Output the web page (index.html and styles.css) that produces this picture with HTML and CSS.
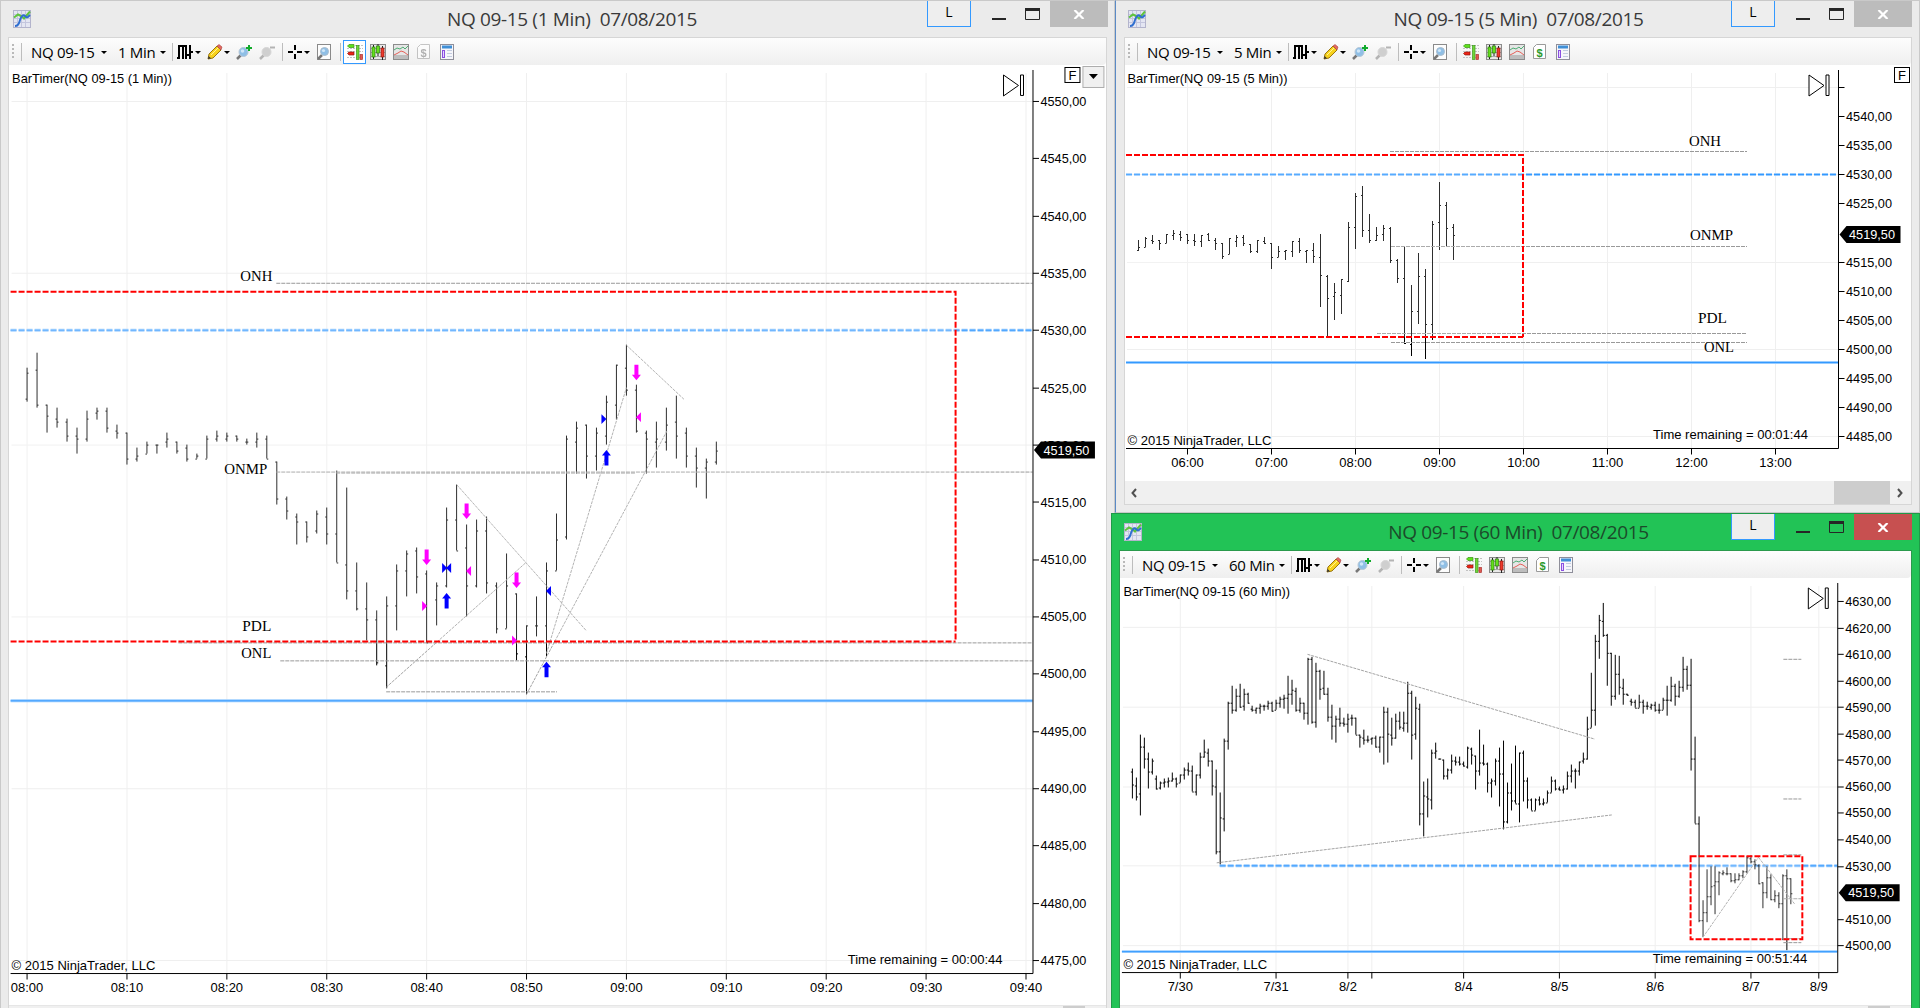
FILE: index.html
```html
<!DOCTYPE html>
<html lang="en">
<head>
    <meta charset="UTF-8">
    <title>NQ 09-15</title>
    <link rel="stylesheet" href="styles.css">
</head>
<body>
<svg class="defs" width="0" height="0">
    <symbol id="i-app" viewBox="0 0 18 18"><rect x=".5" y=".5" width="17" height="17" fill="#e4e6f2" stroke="#b3b4cc"/><path d="M4.500 1v16M8.500 1v16M12.500 1v16M1 4.500h16M1 8.500h16M1 12.500h16" stroke="#c4c6de" fill="none"/><path d="M1 7.500l4-3 4 2 2 2 6-7" stroke="#5fc43c" stroke-width="2" fill="none"/><path d="M2 16c4 0 4-3 5-6s3-6 5-4 2 2 5-1" stroke="#2f6fd0" stroke-width="2" fill="none"/></symbol>
    <symbol id="i-bars" viewBox="0 0 16 16"><path d="M2 1v14M0 14h2M2 2h3M6 1v14M9 1v14M6 14h1M7 2h2M9 11h2M13 1v14M11 11h2M13 8h3" stroke="#000" stroke-width="2" fill="none"/></symbol>
    <symbol id="i-pencil" viewBox="0 0 16 16"><path d="M1 15l1-5 8-8 4 4-8 8z" fill="#f7d21c" stroke="#9a7510"/><path d="M4 11l7-7" stroke="#fff39a"/><path d="M10 2l2-1.500 3 2.500-1 3z" fill="#e46a62" stroke="#a8453f" stroke-width=".6"/><path d="M1 15l.6-3L4 14.300z" fill="#333"/></symbol>
    <symbol id="i-zin" viewBox="0 0 17 16"><path d="M1 15l4-4" stroke="#777" stroke-width="2.500"/><circle cx="7.500" cy="8" r="4.500" fill="#8fbfe6" stroke="#b5c6d6"/><circle cx="6.500" cy="7" r="1.800" fill="#cfe6f8"/><path d="M13 1v6M10 4h6" stroke="#12ab2c" stroke-width="2"/></symbol>
    <symbol id="i-zout" viewBox="0 0 17 16"><path d="M1 15l4-4" stroke="#b4b4b4" stroke-width="2.500"/><circle cx="7.500" cy="8" r="4.500" fill="#cfcfcf" stroke="#d6d6d6"/><path d="M11 3.500h5" stroke="#b4b4b4" stroke-width="2"/></symbol>
    <symbol id="i-cross" viewBox="0 0 14 14"><path d="M7 0v5M7 9v5M0 7h5M9 7h5" stroke="#000" stroke-width="2"/></symbol>
    <symbol id="i-page" viewBox="0 0 15 16"><rect x=".5" y=".5" width="13" height="15" fill="#fdfdfd" stroke="#8a8a8a"/><path d="M1 15l4-4" stroke="#777" stroke-width="2.500"/><circle cx="7.500" cy="7.500" r="4" fill="#8fbfe6" stroke="#a9bccd"/><circle cx="6.500" cy="6.500" r="1.600" fill="#cfe6f8"/></symbol>
    <symbol id="i-depth" viewBox="0 0 16 16"><path d="M0 4.500h16M0 7.500h16M0 13.500h16M8 1.500h8" stroke="#c2c2c2" stroke-dasharray="2 1"/><path d="M.5 2L2 .5h5v3H2z" fill="#5fe01c" stroke="#3a9414" stroke-width=".7"/><path d="M.5 9.500L2 8h5v3H2z" fill="#ee2416" stroke="#8d1a12" stroke-width=".7"/><rect x="9.500" y="1.500" width="2.500" height="14" fill="#6fd638" stroke="#3f9a20" stroke-width=".7"/><rect x="13" y="10.500" width="2.500" height="5" fill="#e25a50" stroke="#a33" stroke-width=".7"/></symbol>
    <symbol id="i-candles" viewBox="0 0 16 16"><rect x=".5" y=".5" width="15" height="15" fill="#e9e9e9" stroke="#8c8c8c"/><path d="M1 4.500h14M1 8.500h14M1 12.500h14" stroke="#a8a8a8"/><path d="M3.500 1v14M8 0v12M12.500 2v14" stroke="#222"/><rect x="2" y="3" width="3" height="10" fill="#64e01c" stroke="#2f7d10" stroke-width=".7"/><rect x="6.500" y="2" width="3" height="7" fill="#64e01c" stroke="#2f7d10" stroke-width=".7"/><rect x="11" y="4" width="3" height="9" fill="#ee3a2c" stroke="#8d1a12" stroke-width=".7"/></symbol>
    <symbol id="i-lines" viewBox="0 0 16 16"><rect x=".5" y=".5" width="15" height="15" fill="#e6e6e6" stroke="#8c8c8c"/><path d="M1 11h14v4H1z" fill="#bdbdbd"/><path d="M1 6l3-2 3 1 3-2 2 2 3-3" stroke="#4fae74" fill="none"/><path d="M1 11l4-2 3-2 3 1 4 3" stroke="#e46058" fill="none"/></symbol>
    <symbol id="i-dollar" viewBox="0 0 13 16"><path d="M3.500.5h9v14h-12v-11z" fill="#fff" stroke="#9a9a9a"/><text x="6.500" y="12.500" text-anchor="middle" class="dollar">$</text></symbol>
    <symbol id="i-panel" viewBox="0 0 14 16"><rect x=".5" y=".5" width="13" height="15" fill="#f6f6fa" stroke="#8f8f9a"/><path d="M2 3h10" stroke="#3f8fd6" stroke-width="3"/><rect x="2.500" y="6.500" width="2" height="7" fill="#e6d6ff" stroke="#8a4fe0"/><path d="M7 6.500h5M7 9.500h5M7 12.500h5" stroke="#c2cbe0"/></symbol>
    <symbol id="i-min" viewBox="0 0 14 3"><path d="M0 1h14" stroke="#262626" stroke-width="2"/></symbol>
    <symbol id="i-max" viewBox="0 0 15 12"><path d="M.5 1v10.500h14V1" fill="none" stroke="#262626"/><path d="M0 1.500h15" stroke="#262626" stroke-width="3"/></symbol>
    <symbol id="i-close" viewBox="0 0 12 9"><path d="M1.500 0l9 9M10.500 0l-9 9" stroke="#fff" stroke-width="2.200"/></symbol>
</svg>

<div class="window win-1">
    <div class="titlebar">
        <svg class="app-icon"><use href="#i-app"/></svg>
        <h1>NQ 09-15 (1 Min)&nbsp; 07/08/2015</h1>
        <div class="controls"></div>
    </div>
    <div class="client">
        <div class="toolbar" data-period="1 Min"></div>
        <svg class="chart" id="chart-1" viewBox="9 65 1097 941"></svg>
        <div class="scrollbar"><span class="thumb"></span></div>
    </div>
</div>

<div class="window win-5">
    <div class="titlebar">
        <svg class="app-icon"><use href="#i-app"/></svg>
        <h1>NQ 09-15 (5 Min)&nbsp; 07/08/2015</h1>
        <div class="controls"></div>
    </div>
    <div class="client">
        <div class="toolbar" data-period="5 Min"></div>
        <svg class="chart" id="chart-5" viewBox="1125 65 786 416"></svg>
        <div class="scrollbar">
            <svg class="arrow" viewBox="0 0 6 10"><path d="M5 1L1.500 5 5 9"/></svg>
            <span class="thumb"></span>
            <svg class="arrow" viewBox="0 0 6 10"><path d="M1 1l3.500 4L1 9"/></svg>
        </div>
    </div>
</div>

<div class="window win-60 active">
    <div class="titlebar">
        <svg class="app-icon"><use href="#i-app"/></svg>
        <h1>NQ 09-15 (60 Min)&nbsp; 07/08/2015</h1>
        <div class="controls"></div>
    </div>
    <div class="client">
        <div class="toolbar" data-period="60 Min"></div>
        <svg class="chart" id="chart-60" viewBox="1120 578 791 428"></svg>
        <div class="scrollbar"><span class="thumb"></span></div>
    </div>
</div>

<script src="script.js"></script>
</body>
</html>
```
FILE: styles.css
```css
* { box-sizing: border-box; }
body { margin: 0; width: 1920px; height: 1008px; overflow: hidden; position: relative; background: #ebebeb; font-family: "Open Sans", sans-serif; color: #000; }
.defs { position: absolute; }

/* windows */
.window { position: absolute; display: flex; flex-direction: column; background: #ebebeb; border: 1px solid #c9c9c9; overflow: hidden; }
.win-1 { left: 0; top: 0; width: 1115px; height: 1020px; padding: 0 7px; }
.win-5 { left: 1115px; top: 0; width: 805px; height: 513px; padding: 0 7px 7px 8px; border-left-color: #5a8ac6; }
.win-60 { left: 1111px; top: 513px; width: 809px; height: 507px; padding: 0 7px; }
.active { background: #22c356; border-color: #1f9a48; }

.titlebar { height: 36px; flex: none; display: flex; align-items: flex-start; position: relative; }
.app-icon { width: 18px; height: 18px; margin: 9px 0 0 5px; }
.win-5 .app-icon { margin-left: 4px; }
.titlebar h1 { flex: 1; margin: 4px 0 0; text-align: center; font-size: 19px; line-height: 28px; font-weight: normal; color: #3a3a3a; letter-spacing: -0.35px; white-space: nowrap; }
.win-1 h1 { padding-left: 186px; }
.win-5 h1 { padding-left: 160px; }
.win-60 h1 { padding-left: 164px; }
.active h1 { color: #1c4a2a; }
.controls { display: flex; flex: none; }
.link-btn { width: 44px; height: 26px; border: 1px solid #3399ff; border-top: 0; background: #eee; text-align: center; font: 14px/22px "Open Sans", sans-serif; }
.controls .min { width: 14px; height: 3px; margin: 17px 19px 0 21px; }
.controls .max { width: 15px; height: 12px; margin: 7px 10px 0 0; }
.controls .close { width: 58px; height: 26px; background: #bcbcbc; display: flex; align-items: center; justify-content: center; }
.close svg { width: 12px; height: 9px; }
.active .close { background: #c75050; }
.win-1 .controls { margin-right: -1px; }

.client { flex: 1; min-height: 0; display: flex; flex-direction: column; background: #fff; border: 1px solid #d6d6d6; border-bottom: 0; }
.win-5 .client { border-bottom: 1px solid #d6d6d6; }
.active .client { border-color: #2a9a4c; }

/* toolbar */
.toolbar { height: 27px; flex: none; display: flex; align-items: center; padding-left: 3px; background: linear-gradient(#fdfdfd, #efefef); border-bottom-right-radius: 4px; font-size: 15px; letter-spacing: -0.3px; }
.toolbar > * { flex: none; }
.grip { width: 2px; height: 15px; background: repeating-linear-gradient(#b9b9b9 0 2px, transparent 2px 4px); }
.sep { width: 1px; height: 18px; background: #bdbdbd; }
.instrument { width: 64px; margin-left: 9px; line-height: 20px; white-space: nowrap; }
.period { width: 36px; margin-left: 11px; line-height: 20px; white-space: nowrap; }
.period.wide { width: 44px; }
.caret { width: 0; border: 3px solid transparent; border-top-color: #000; border-bottom: 0; }
.toolbar .ic { height: 16px; }
.tool { width: 23px; height: 24px; display: flex; align-items: center; justify-content: center; }
.tool.on { border: 1px solid #3399ff; background: #fff; }
.tool.off { opacity: .55; filter: grayscale(1); }
.dollar { font: bold 11px "Liberation Sans", sans-serif; fill: #2c9a2c; }

/* scrollbars */
.scrollbar { flex: none; display: flex; align-items: center; background: #f0f0f0; }
.thumb { background: #cdcdcd; align-self: stretch; }
.win-1 .scrollbar, .win-60 .scrollbar { height: 14px; border-top: 1px solid #e6e6e6; justify-content: flex-end; }
.win-1 .thumb, .win-60 .thumb { width: 22px; margin-right: 21px; }
.win-5 .scrollbar { height: 23px; padding: 0 8px 0 6px; }
.win-5 .thumb { width: 56px; margin: 0 7px 0 auto; }
.scrollbar .arrow { width: 6px; height: 10px; fill: none; stroke: #505050; stroke-width: 2; }

/* charts */
.chart { flex: 1; min-height: 0; display: block; width: 100%; font: 13px "Liberation Sans", Arial, sans-serif; }
.grid { stroke: #efefef; }
.axis { stroke: #000; fill: none; }
.bar { stroke: #000; fill: none; }
.study { stroke: #999; fill: none; stroke-dasharray: 4 1; }
.trend { stroke: #a3a3a3; fill: none; stroke-dasharray: 3 1; }
.halo { stroke: #99ccff; stroke-width: 3; }
.level { stroke: #3399ff; stroke-width: 1; }
.dash { stroke-dasharray: 6 2; }
.box { fill: #fff; fill-opacity: .18; stroke: none; }
.box-line { fill: none; stroke: #f00; stroke-width: 2; stroke-dasharray: 6 2; }
.label { font: 15px "Liberation Serif", "Times New Roman", serif; }
.sell { fill: #f0f; }
.buy { fill: #00f; }
.tag-text { fill: #fff; }
```
FILE: script.js
```js
// toolbars and window buttons
const caret = m => `<span class="caret" style="margin:1px 0 0 ${m}px"></span>`;
const icon = (id, w, m) => `<svg class="ic" width="${w}" style="margin-left:${m}px"><use href="#i-${id}"/></svg>`;
const sep = m => `<span class="sep" style="margin-left:${m}px"></span>`;
const tool = (id, w, cls) => `<span class="tool ${cls}">${icon(id, w, 0)}</span>`;

document.querySelectorAll('.toolbar').forEach(bar => {
    const period = bar.dataset.period;
    const first = period === '1 Min';
    bar.innerHTML = '<span class="grip"></span>' + sep(7) +
        '<span class="instrument">NQ 09-15</span>' + caret(6) +
        `<span class="period ${period.length > 5 ? 'wide' : ''}">${period}</span>` + caret(6) + sep(6) +
        icon('bars', 16, 4) + caret(2) + icon('pencil', 16, 6) + caret(1) +
        icon('zin', 17, 6) + icon('zout', 17, 6) + sep(6) +
        icon('cross', 14, 5) + caret(2) + icon('page', 15, 7) + sep(8) +
        '<span style="width:2px"></span>' +
        tool('depth', 16, first ? 'on' : '') + tool('candles', 16, '') + tool('lines', 16, '') +
        tool('dollar', 13, first ? 'off' : '') + tool('panel', 14, '');
});

document.querySelectorAll('.controls').forEach(c => {
    c.innerHTML = '<span class="link-btn">L</span><svg class="min"><use href="#i-min"/></svg>' +
        '<svg class="max"><use href="#i-max"/></svg><span class="close"><svg><use href="#i-close"/></svg></span>';
});

// svg helpers
const line = (cls, x1, y1, x2, y2) => `<line class="${cls}" x1="${x1}" y1="${y1}" x2="${x2}" y2="${y2}"/>`;
const text = (x, y, s, len, cls = '', anchor = 'start') =>
    `<text class="${cls}" x="${x}" y="${y}" text-anchor="${anchor}"${len ? ` textLength="${len}" lengthAdjust="spacingAndGlyphs"` : ''}>${s}</text>`;

// rows are [high, low, open, close] in thirds of a pixel below y0
function bars(x0, step, y0, rows) {
    let d = '';
    rows.forEach(([h, l, o, c], i) => {
        const x = x0 + i * step;
        const y = v => Math.floor(y0 + v / 3);
        d += `M${x} ${y(h)}V${Math.max(y(l), y(h) + 1)}M${x - 1.5} ${y(o) + 0.5}h1.500M${x} ${y(c) + 0.5}h1.500`;
    });
    return `<path class="bar" d="${d}"/>`;
}

function level(x1, x2, y, dashed) {
    const d = dashed ? ' dash' : '';
    return line('halo' + d, x1, y, x2, y) + line('level' + d, x1, y, x2, y);
}

function redBox(x1, y1, x2, y2, open) {
    const path = open ? `M${x1} ${y1}H${x2}V${y2}M${x1} ${y2}H${x2}` : `M${x1} ${y1}H${x2}V${y2}H${x1}Z`;
    return `<rect class="box" x="${x1}" y="${y1}" width="${x2 - x1}" height="${y2 - y1}"/><path class="box-line" d="${path}"/>`;
}

function axes(c) {
    let s = '';
    c.gridY.forEach(y => s += line('grid', c.left, y, c.right, y));
    c.gridX.forEach(([x]) => s += line('grid', x, c.top + 3, x, c.bottom));
    return s;
}

function axisLabels(c) {
    let s = `<path class="axis" d="M${c.right} ${c.top}V${c.bottom}H${c.left - 1}"/>`;
    for (let p = c.pMax; p >= c.pMin; p -= c.pStep) {
        if (c.skip === p) continue;
        const y = Math.round(c.yMax + (c.pMax - p) * c.scale) + 0.5;
        s += line('axis', c.right, y, c.right + 6, y);
        s += text(c.right + 7.5, y + 4.5, p + ',00', 46);
    }
    c.gridX.forEach(([x, label]) => {
        s += line('axis', x, c.bottom, x, c.bottom + 6);
        if (label) s += text(x, c.bottom + 18.5, label, 0, '', 'middle');
    });
    const x = c.right, y = c.tagY;
    s += `<path d="M${x + 1} ${y}l7-8.500h54v17h-54z"/>` + text(x + 10.5, y + 4.5, '4519,50', 46, 'tag-text');
    s += `<path d="M${x - 29.5} ${c.top + 5}v21l15-10.500zM${x - 12.5} ${c.top + 5}h3v20.500h-3z" fill="#fff" stroke="#000"/>`;
    return s;
}

const fBox = x => `<rect x="${x}" y="67.500" width="15" height="15" fill="#fff" stroke="#000"/>` + text(x + 7.5, 80, 'F', 0, '', 'middle');

const down = (x, y) => `<path class="sell" d="M${x - 2} ${y}h4v10h2.500L${x} ${y + 15.5}l-4.500-5.500h2.500z"/>`;
const up = (x, y) => `<path class="buy" d="M${x - 2} ${y + 15}h4v-10h2.500L${x} ${y - 0.5}l-4.500 5.500h2.500z"/>`;
// small triangles: dir 1 points right, -1 points left
const tri = (cls, x, y, dir) => `<path class="${cls}" d="M${x} ${y}l${-5 * dir}-5v10z"/>`;

/* ---- 1 minute ---- */
const c1 = {
    left: 11, right: 1033.5, top: 70, bottom: 974.5,
    gridY: [101.5, 273.5, 445.5, 617.5, 789.5, 961.5],
    gridX: ['08:00', '08:10', '08:20', '08:30', '08:40', '08:50', '09:00', '09:10', '09:20', '09:30', '09:40'].map((t, i) => [26.5 + i * 100, t]),
    pMax: 4550, pMin: 4475, pStep: 5, yMax: 101, scale: 11.467, tagY: 450.5
};
const bars1a = [
    [115,217,208,130],[70,236,121,227],[226,311,227,260],[235,296,268,278],[267,338,277,320],[295,374,319,328],[243,338,328,268],
    [235,270,250,244],[235,311,244,295],[286,329,304,311],[310,406,310,389],[354,398,389,380],[337,374,374,346],[346,374,346,346],
    [310,356,337,328],[337,374,337,364],[346,398,356,389],[373,389,388,380],[319,389,389,328],[303,338,328,320],[310,338,328,319],
    [319,338,319,329],[328,347,338,338],[310,356,338,328],[319,389,328,389],[397,527,397,508],[502,572,508,545],[553,647,563,577],
    [577,641,577,622],[543,613,604,553],[534,647,563,613],[424,701,613,701],[475,812,707,785],[700,845,785,838],[760,935,838,871],
    [844,1010,871,1000],[802,1078,1009,829],[706,905,829,724],[664,803,724,673],[655,794,664,742],[724,941,733,940],[760,889,811,769],
    [534,776,769,571],[465,664,571,664],[586,862,656,769],[571,776,769,604],[562,794,604,760],[760,914,769,898],[673,898,898,769],
    [793,993,793,973],[889,1096,982,889],[802,923,889,889],[700,983,889,724]
];
const bars1b = [
    [583,755,755,661],[349,661,652,358],[307,464,367,325],[316,479,316,409],[325,455,409,340],[229,377,349,247],[136,300,256,136],
    [76,230,145,211],[196,341,211,334],[334,464,340,358],[307,446,367,358],[265,395,367,316],[229,419,307,349],[325,446,340,409],
    [385,506,409,445],[418,539,445,427],[367,437,427,394]
];
document.getElementById('chart-1').innerHTML = axes(c1) +
    level(10, 1033, 330.5, true) + level(10, 1033, 701.5) +
    bars(26.5, 10, 330, bars1a) + bars(556.5, 10, 320, bars1b) +
    line('study', 276, 283.5, 1033, 283.5) + line('study', 276, 472.5, 1033, 472.5) + line('study', 336, 473.5, 635, 473.5) +
    line('study', 178, 643.5, 1033, 643.5) + line('study', 280, 661.5, 1033, 661.5) + line('study', 386, 692.5, 557, 692.5) +
    line('trend', 386, 688, 526, 563) + line('trend', 456.5, 485, 586.5, 631.5) + line('trend', 526.5, 695, 667, 431.5) +
    line('trend', 546.5, 654, 626.5, 388) + line('trend', 626.5, 345.5, 684.5, 400) +
    redBox(10, 292, 956, 642, true) +
    down(426.5, 550) + down(466.5, 504) + down(516.5, 573) + down(636.5, 365) +
    up(446.5, 594) + up(546.5, 663) + up(606.5, 451) +
    tri('sell', 427, 606.5, 1) + tri('sell', 517, 641, 1) + tri('sell', 466, 571.5, -1) + tri('sell', 636, 417.5, -1) +
    tri('buy', 447, 568.5, 1) + tri('buy', 446, 568.5, -1) + tri('buy', 546, 591.5, -1) + tri('buy', 606.5, 419.5, 1) +
    text(240, 281, 'ONH', 32, 'label') + text(224, 474, 'ONMP', 43, 'label') + text(242, 632, 'PDL', 29, 'label') + text(241, 659, 'ONL', 30, 'label') +
    text(11.5, 83, 'BarTimer(NQ 09-15 (1 Min))', 160) + text(11, 970.5, '© 2015 NinjaTrader, LLC', 144) +
    text(848, 965, 'Time remaining = 00:00:44', 155) +
    axisLabels(c1) + fBox(1065.5) +
    '<rect x="1083.500" y="66.500" width="21" height="21" fill="#f0f0f0" stroke="#adadad"/><path d="M1089.500 74h9l-4.500 5z"/>';

/* ---- 5 minutes ---- */
const c5 = {
    left: 1127, right: 1838.5, top: 70, bottom: 448.5,
    gridY: [87.5, 174.5, 262.5, 349.5, 436.5],
    gridX: ['06:00', '07:00', '08:00', '09:00', '10:00', '11:00', '12:00', '13:00'].map((t, i) => [1187.5 + i * 84, t]),
    pMax: 4540, pMin: 4485, pStep: 5, yMax: 116, scale: 5.82, skip: 4520, tagY: 234.5
};
const bars5 = [
    [241,275,271,262],[232,263,262,235],[226,254,241,244],[241,272,241,250],[223,251,250,223],[211,242,226,220],[214,245,223,232],
    [223,254,223,241],[223,260,241,244],[226,263,244,226],[220,245,223,241],[235,272,241,250],[250,299,250,290],[235,284,283,235],
    [226,263,244,232],[226,260,232,250],[253,281,253,274],[241,281,274,241],[232,254,244,250],[250,329,250,292],[259,293,292,274],
    [271,302,274,271],[244,293,274,244],[235,281,244,271],[271,311,274,271],[250,311,271,290],[223,443,292,346],[346,528,349,415],
    [370,482,409,397],[358,464,406,358],[187,368,364,202],[100,269,202,109],[79,233,106,211],[163,251,211,241],[202,245,241,226],
    [196,245,223,205],[202,311,205,301],[298,371,301,355],[259,554,355,550],[376,590,553,454],[280,494,454,349],[328,599,349,493],
    [184,542,493,193],[67,272,187,136],[127,263,136,205],[193,302,202,226]
];
document.getElementById('chart-5').innerHTML = axes(c5) +
    level(1126, 1838, 174.5, true) + level(1126, 1838, 362.5) +
    bars(1138.5, 7, 160, bars5) +
    line('study', 1390, 151.5, 1747, 151.5) + line('study', 1391, 246.5, 1747, 246.5) +
    line('study', 1377, 333.5, 1747, 333.5) + line('study', 1391, 342.5, 1747, 342.5) +
    redBox(1126, 155, 1523, 337, true) +
    text(1689, 146, 'ONH', 32, 'label') + text(1690, 240, 'ONMP', 43, 'label') + text(1698, 323, 'PDL', 29, 'label') + text(1704, 352, 'ONL', 30, 'label') +
    text(1127.5, 83, 'BarTimer(NQ 09-15 (5 Min))', 160) + text(1127.5, 445, '© 2015 NinjaTrader, LLC', 144) +
    text(1653, 439, 'Time remaining = 00:01:44', 155) +
    line('axis', 1838, 87.5, 1844.5, 87.5) + axisLabels(c5) + fBox(1894.5);

/* ---- 60 minutes ---- */
const c60 = {
    left: 1122, right: 1838.5, top: 583, bottom: 973.5,
    gridY: [627.5, 707.5, 787.5, 866.5, 946.5],
    gridX: [[1179.5, '7/30'], [1275.5, '7/31'], [1347.5, '8/2'], [1371.5], [1463.5, '8/4'], [1559.5, '8/5'], [1655.5, '8/6'], [1751.5, '8/7'], [1819.5, '8/9']],
    pMax: 4630, pMin: 4500, pStep: 10, yMax: 601, scale: 2.655, skip: 4520, tagY: 893.5
};
const bars60a = [
    [628,719,637,676],[655,725,679,712],[525,770,703,562],[534,627,562,597],[579,689,597,637],[598,647,637,603],[649,690,658,688],
    [668,690,685,670],[658,684,670,668],[656,684,668,664],[640,668,664,658],[655,685,658,673],[646,671,670,646],[625,662,646,632],
    [610,650,632,634],[619,698,634,697],[646,710,697,646],[580,659,646,592],[541,596,592,577],[568,623,580,604],[604,708,604,680],
    [631,886,683,877],[700,915,877,776],[538,818,778,544],[427,570,544,430],[379,464,430,451],[388,458,451,409],[373,446,409,442],
    [388,455,440,403],[400,434,403,431],[439,458,448,451],[446,464,451,446],[433,464,446,440],[437,455,440,438],[424,452,438,431],
    [427,458,431,455],[421,452,451,430],[413,446,430,418],[406,449,418,415],[349,464,415,403],[361,437,403,391],[385,458,394,451],
    [415,461,451,430],[430,482,430,461],[295,497,461,298],[292,494,298,487],[310,506,487,334],[331,422,334,388],[334,407,385,403],
    [385,488,403,473],[437,542,473,500],[469,551,500,479],[446,503,479,490],[475,503,490,494],[463,521,494,479],[466,500,475,475],
    [475,527,475,526],[526,566,526,533],[511,557,535,540],[529,550,542,542],[535,556,538,536],[529,566,536,563],[532,581,563,533],
    [442,617,533,457],[445,611,457,523],[475,560,526,535],[463,537,535,485],[457,512,485,503],[457,518,505,491],[367,521,491,400],
    [394,600,400,526],[412,540,523,445],[433,800,448,763],[667,833,763,709],[658,776,712,718],[571,752,721,580],[549,599,580,573],
    [598,600,598,598],[600,662,600,649],[628,662,649,632],[586,644,632,604],[592,620,604,607],[592,620,607,613],[607,623,613,619],
    [562,628,622,565],[565,616,568,586],[589,692,589,634],[511,650,634,610],[556,620,610,613],[610,701,613,670]
];
const bars60b = [
    [838,896,850,845],[778,860,845,785],[745,923,785,823],[724,992,823,968],[850,973,968,880],[793,935,880,905],[739,914,905,913],
    [760,971,913,760],[754,908,760,845],[835,929,845,901],[898,935,901,934],[898,935,934,901],[892,920,901,913],[898,920,913,911],
    [874,911,911,880],[832,881,880,844],[841,875,844,869],[862,875,869,872],[859,884,872,869],[817,872,869,829],[796,850,829,814],
    [808,868,814,814],[787,830,814,787],[760,793,785,778],[652,782,778,688],[520,686,685,631],[406,680,631,424],[346,479,424,361],
    [310,413,364,406],[403,560,406,460],[460,620,460,590],[466,602,590,524],[469,585,524,563],[538,617,566,583],[583,590,583,587],
    [598,620,605,608],[601,626,608,625],[586,626,625,608],[601,643,608,619],[607,632,619,619],[613,632,623,617],[607,638,617,631],
    [613,643,631,631],[595,632,631,601],[559,650,601,601],[532,607,601,559],[553,620,559,589],[544,596,589,562],[472,577,562,508],
    [500,570,508,556],[478,815,556,778],[712,973,778,973],[952,1270,973,1264],[1203,1315,1264,1240],[1111,1270,1240,1192],
    [1102,1220,1192,1162],[1102,1246,1160,1147],[1117,1189,1147,1120],[1114,1129,1124,1120],[1105,1129,1124,1124],[1123,1150,1124,1144],
    [1123,1153,1144,1141],[1123,1144,1141,1129],[1114,1138,1129,1117],[1072,1123,1117,1075],[1069,1093,1078,1087],[1081,1111,1087,1096],
    [1096,1156,1100,1153],[1150,1228,1150,1180],[1102,1198,1180,1135],[1126,1203,1135,1200],[1174,1210,1200,1189],[1180,1228,1189,1213],
    [1126,1324,1213,1129],[1111,1355,1129,1138],[1138,1216,1138,1183]
];
document.getElementById('chart-60').innerHTML = axes(c60) +
    level(1219, 1838, 866.5, true) + level(1121, 1838, 952.5) +
    bars(1131.5, 4, 560, bars60a) + bars(1491.5, 4, 500, bars60b) +
    [659.5, 799.5, 855.5, 899.5, 939.5, 943.5].map(y => line('study', 1784, y, 1802, y)).join('') +
    line('trend', 1307, 654.5, 1595, 739.5) + line('trend', 1216, 863.5, 1612, 815.5) +
    line('trend', 1703.5, 938, 1759, 858) + line('trend', 1759, 858, 1795.5, 905) +
    redBox(1691, 857, 1803, 940) +
    text(1122.5, 596, 'BarTimer(NQ 09-15 (60 Min))', 167) + text(1122.5, 970, '© 2015 NinjaTrader, LLC', 144) +
    text(1653, 964, 'Time remaining = 00:51:44', 155) +
    axisLabels(c60);
```
